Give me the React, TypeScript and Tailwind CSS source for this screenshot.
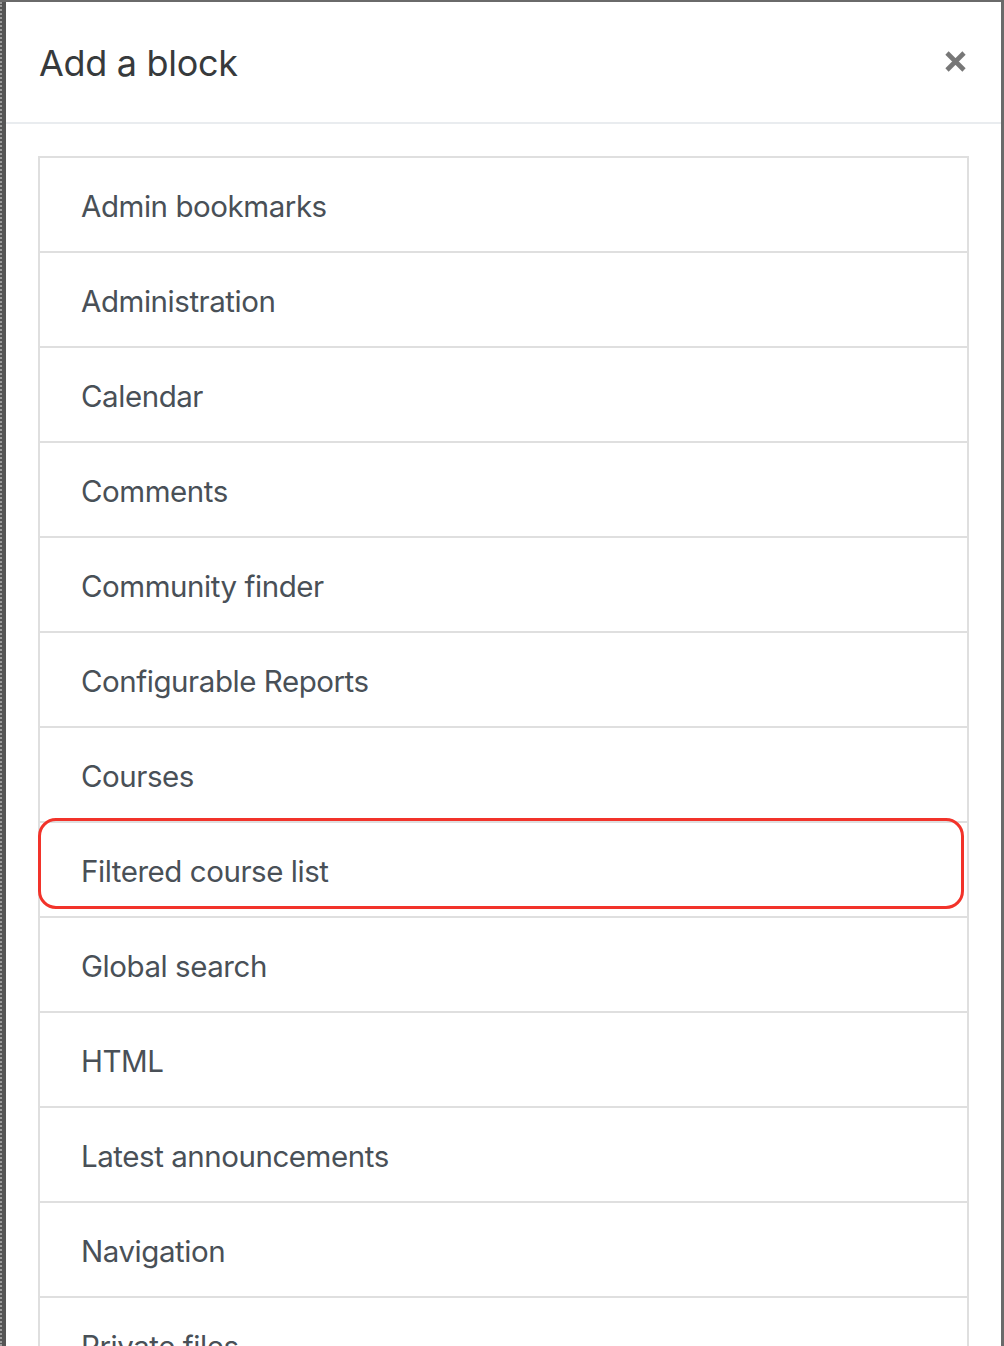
import React from 'react';

const blocks = [
  'Admin bookmarks',
  'Administration',
  'Calendar',
  'Comments',
  'Community finder',
  'Configurable Reports',
  'Courses',
  'Filtered course list',
  'Global search',
  'HTML',
  'Latest announcements',
  'Navigation',
  'Private files',
];

const App = () => {
  return (
    <div
      className="flex h-[1346px] overflow-hidden bg-[#6a6a6a] pt-[2px] pr-[3px]"
      style={{ fontFamily: 'Inter, "Liberation Sans", sans-serif' }}
    >
      {/* dotted page edge behind the modal */}
      <div className="w-[6px] shrink-0 border-l-[2px] border-dotted border-[#9a9a9a] bg-[#555]" />

      <div className="flex flex-1 flex-col bg-white">
        {/* Header */}
        <div className="flex h-[122px] shrink-0 items-center justify-between border-b-2 border-[#e9ecef] pt-[3px] pl-[33px] pr-[34px]">
          <h5 className="text-[36px] leading-[45px] font-normal text-[#373a3c] tracking-[-0.3px]">Add a block</h5>
          <button className="-mt-[5px] flex h-[24px] w-[24px] items-center justify-center">
            <svg width="23" height="23" viewBox="0 0 23 23">
              <path d="M3 3 L20 20 M20 3 L3 20" stroke="#777" strokeWidth="4.6" strokeLinecap="butt" />
            </svg>
          </button>
        </div>

        {/* Body */}
        <div className="px-[32px] pt-[32px]">
          <div className="border-x-2 border-t-2 border-[#dfdfdf]">
            {blocks.map((name) => (
              <div key={name} className="relative border-b-2 border-[#dfdfdf] pt-[26px] pb-[22px] pl-[41px]">
                <span className="block text-[29.5px] leading-[45px] text-[#495057] tracking-[-0.45px]">{name}</span>
                {name === 'Filtered course list' && (
                  <div className="pointer-events-none absolute top-[-5px] left-[-2px] right-[3px] bottom-[7px] rounded-[18px] border-[3px] border-[#f2332a]" />
                )}
              </div>
            ))}
          </div>
        </div>
      </div>
    </div>
  );
};

export default App;
